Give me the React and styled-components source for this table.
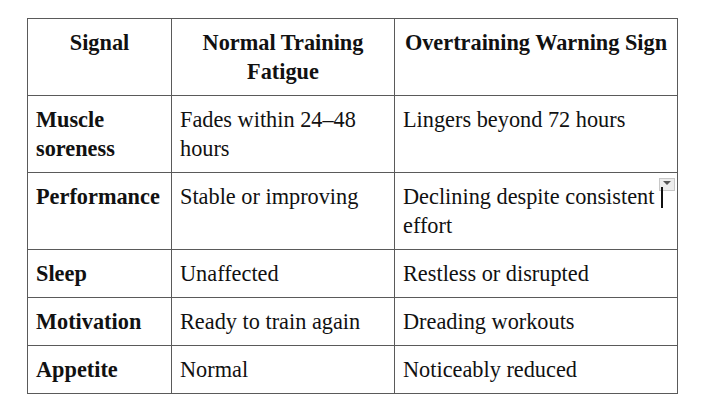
import React from "react";
import styled, { createGlobalStyle } from "styled-components";

const Global = createGlobalStyle`
  html, body { margin: 0; padding: 0; background: #fff; }
  body { font-family: "Liberation Serif", "Times New Roman", serif; color: #111; }
`;

const Wrap = styled.div`
  padding: 18px 27px;
`;

const Frame = styled.div`
  position: relative;
  width: 650px;
`;

const Table = styled.table`
  border-collapse: collapse;
  width: 650px;
  table-layout: fixed;
  font-size: 22.3px;
  line-height: 29px;
`;

const Col = styled.col`
  width: ${(p) => p.$w}px;
`;

const Th = styled.th`
  box-sizing: border-box;
  border: 1px solid #5a5a5a;
  padding: 9px 8px;
  text-align: center;
  vertical-align: top;
  font-weight: bold;
`;

const Td = styled.td`
  box-sizing: border-box;
  border: 1px solid #5a5a5a;
  padding: 9px 8px;
  text-align: left;
  vertical-align: top;
  font-weight: ${(p) => (p.$bold ? "bold" : "normal")};
`;

const DropButton = styled.div`
  position: absolute;
  left: 632px;
  top: 160px;
  width: 14px;
  height: 11px;
  background: #ececec;
  border: 1px solid #c8c8c8;
  display: flex;
  align-items: center;
  justify-content: center;
  &::after {
    content: "";
    border-left: 4px solid transparent;
    border-right: 4px solid transparent;
    border-top: 4px solid #555;
    margin-top: -3px;
  }
`;

const Caret = styled.div`
  position: absolute;
  left: 634px;
  top: 169px;
  width: 2px;
  height: 21px;
  background: #111;
`;

const rows = [
  ["Muscle soreness", "Fades within 24–48 hours", "Lingers beyond 72 hours"],
  ["Performance", "Stable or improving", "Declining despite consistent effort"],
  ["Sleep", "Unaffected", "Restless or disrupted"],
  ["Motivation", "Ready to train again", "Dreading workouts"],
  ["Appetite", "Normal", "Noticeably reduced"],
];

export default function App() {
  return (
    <Wrap>
      <Global />
      <Frame>
        <Table>
          <colgroup>
            <Col $w={144} />
            <Col $w={223} />
            <Col $w={283} />
          </colgroup>
          <thead>
            <tr>
              <Th>Signal</Th>
              <Th>Normal Training Fatigue</Th>
              <Th>Overtraining Warning Sign</Th>
            </tr>
          </thead>
          <tbody>
            {rows.map((r) => (
              <tr key={r[0]}>
                <Td $bold>{r[0]}</Td>
                <Td>{r[1]}</Td>
                <Td>{r[2]}</Td>
              </tr>
            ))}
          </tbody>
        </Table>
        <DropButton />
        <Caret />
      </Frame>
    </Wrap>
  );
}
